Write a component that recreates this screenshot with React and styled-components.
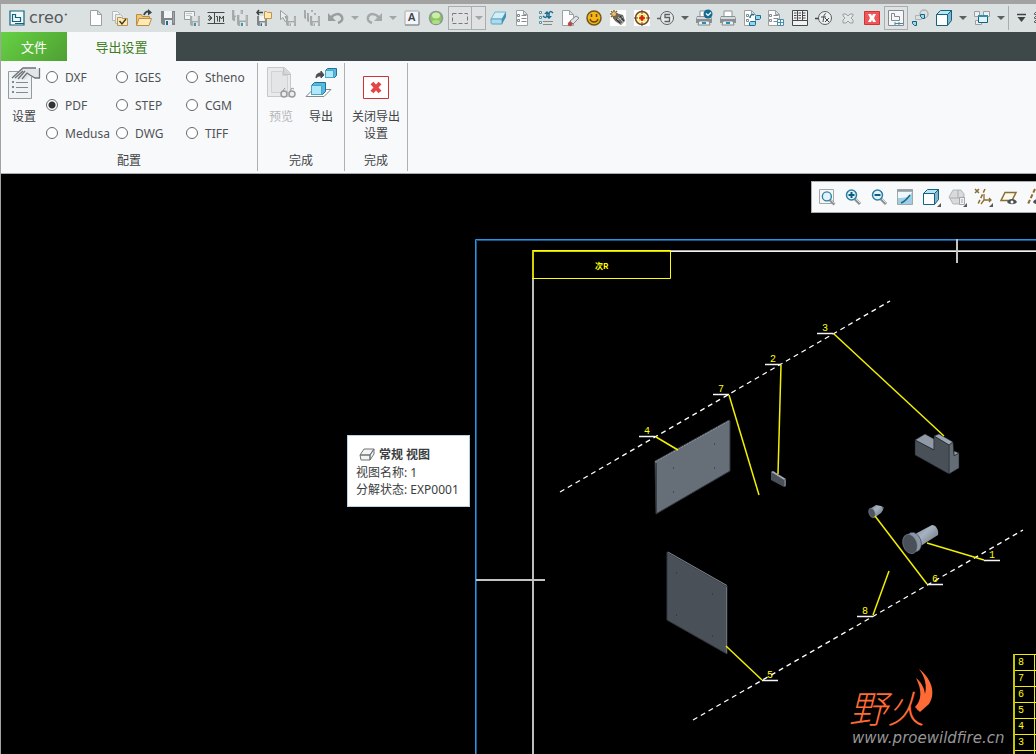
import React from 'react';
import styled, { createGlobalStyle, css } from 'styled-components';

const GlobalStyle = createGlobalStyle`
  * {
    box-sizing: border-box;
  }
  body {
    margin: 0;
    background: #000;
    font-family: 'Noto Sans', 'Noto Sans CJK SC', sans-serif;
    font-size: 12px;
    color: #3f4346;
  }
  button {
    border: none;
    padding: 0;
    background: none;
    font: inherit;
    color: inherit;
  }
`;

const AppStyles = styled.div`
  display: flex;
  flex-direction: column;
  min-height: 100vh;
  border-top: 4px solid #a2a2a2;
  border-left: 1px solid #a2a2a2;
  overflow: hidden;
`;

const QuickBar = styled.header`
  display: flex;
  align-items: center;
  height: 28px;
  background: #dbe1e1;
  overflow: hidden;
`;

const Brand = styled.div`
  display: flex;
  flex: none;
  align-items: center;
  gap: 4px;
  width: 83px;
  padding-left: 8px;
  font-family: 'DejaVu Sans', sans-serif;
  font-size: 16px;
  line-height: 24px;
  color: #54595c;
  sup {
    font-size: 7px;
    line-height: 8px;
  }
`;

const Glyph = styled.svg`
  display: block;
  flex: none;
  width: ${({ $size }) => $size || 16}px;
  height: ${({ $size }) => $size || 16}px;
  overflow: visible;
`;

const ToolButton = styled.button`
  display: flex;
  flex: none;
  align-items: center;
  justify-content: center;
  width: 24px;
  height: 24px;
  ${({ $framed }) =>
    $framed &&
    css`
      border: 1px solid #a9adaf;
      background: #dfe1e3;
    `}
`;

const CaretButton = styled(ToolButton)`
  width: 14px;
  color: ${({ $dim }) => ($dim ? '#a2a6a8' : '#5b5f61')};
  &::before {
    content: '';
    border: 4px solid transparent;
    border-top-color: currentColor;
    border-bottom: none;
  }
  ${({ $framed }) =>
    $framed &&
    css`
      border-left: none;
    `}
`;

const Separator = styled.span`
  flex: none;
  width: 1px;
  height: 24px;
  background: #a9adaf;
`;

const TabBar = styled.nav`
  display: flex;
  height: 29px;
  background: #3f4849;
  font-size: 13px;
`;

const FileButton = styled.button`
  width: 66px;
  color: #fff;
  background: linear-gradient(135deg, #66d143, #4ea033);
`;

const Tab = styled.button`
  width: 109px;
  color: #3f7d22;
  background: #f8f9fb;
`;

const Ribbon = styled.section`
  display: flex;
  padding: 2px 0;
  background: #f8f9fb;
  border-bottom: 1px solid #a9adaf;
`;

const Group = styled.div`
  display: flex;
  flex-direction: column;
  padding: 0 3px;
  border-right: 1px solid #adb0b3;
`;

const GroupBody = styled.div`
  display: flex;
  height: 88px;
  gap: ${({ $gap }) => $gap || 0}px;
`;

const GroupLabel = styled.div`
  line-height: 20px;
  text-align: center;
`;

const BigButton = styled.button`
  display: flex;
  flex-direction: column;
  align-items: center;
  gap: 9px;
  width: ${({ $wide }) => ($wide ? 56 : 40)}px;
  padding: 4px 3px 0;
  line-height: 17px;
  &:disabled {
    color: #b4b6b8;
  }
`;

const FormatGrid = styled.div`
  display: grid;
  grid-template-columns: 70px 70px 68px;
  grid-auto-rows: 28px;
`;

const FormatOption = styled.label`
  display: flex;
  align-items: center;
  gap: 7px;
  color: #505356;
  input {
    appearance: none;
    flex: none;
    width: 12px;
    height: 12px;
    margin: 0;
    border: 1px solid #66696b;
    border-radius: 50%;
    background: #fff;
  }
  input:checked {
    background: radial-gradient(circle, #333 3px, #fff 4px);
  }
`;

const Canvas = styled.main`
  position: relative;
  flex: 1;
  min-height: 580px;
  background: #000;
  overflow: hidden;
`;

const Drawing = styled.svg`
  position: absolute;
  inset: 0;
  width: 100%;
  height: 100%;
  font-family: 'Liberation Mono', monospace;
  font-size: 10px;
`;

const ViewBar = styled.div`
  position: absolute;
  top: 7px;
  left: 810px;
  display: flex;
  align-items: center;
  height: 32px;
  padding-left: 2px;
  background: #f8f9fb;
  border: 1px solid #a9adaf;
`;

const ViewButton = styled(ToolButton)`
  position: relative;
  width: 26px;
  ${({ $menu }) =>
    $menu &&
    css`
      &::after {
        content: '';
        position: absolute;
        right: 3px;
        bottom: 2px;
        border: 2px solid #55595b;
        border-top-color: transparent;
        border-left-color: transparent;
      }
    `}
`;

const Tooltip = styled.div`
  position: absolute;
  top: 261px;
  left: 346px;
  padding: 9px 10px 8px 8px;
  border: 1px solid #b7d3e6;
  background: #fff;
  line-height: 17px;
  white-space: nowrap;
  color: #3b3e40;
`;

const TooltipTitle = styled.div`
  display: flex;
  align-items: center;
  gap: 4px;
  padding-left: 3px;
  line-height: 19px;
  font-weight: 700;
`;

const PartsTable = styled.table`
  position: absolute;
  top: 480px;
  left: 1012px;
  width: 160px;
  border-collapse: collapse;
  font-family: 'Liberation Mono', monospace;
  font-size: 10px;
  line-height: 13px;
  color: #ff0;
  border-left: 2px solid #c8c800;
  td {
    height: 16px;
    padding: 1px 3px;
    border: 1px solid #f0f000;
  }
  td:first-child {
    width: 20px;
    border-left: 2px solid #c8c800;
  }
`;

const Watermark = styled.div`
  position: absolute;
  top: 514px;
  left: 848px;
  font-style: italic;
  svg {
    position: absolute;
    top: -20px;
    left: 61px;
  }
`;

const WatermarkName = styled.div`
  font-family: 'Noto Sans CJK SC', sans-serif;
  font-size: 38px;
  line-height: 38px;
  font-weight: 300;
  color: #ff6a35;
`;

const WatermarkUrl = styled.div`
  padding: 4px 0 0 3px;
  font-family: 'DejaVu Sans', sans-serif;
  font-size: 15px;
  line-height: 16px;
  color: #969696;
`;

const BLUE = '#1b6d92';
const GREY = '#85898b';

const Page = ({ x = 2, y = 0, w = 12, h = 16 }) => (
  <path
    d={`M${x + 0.5} ${y + 0.5}h${w - 5}l4 4v${h - 5}h-${w - 1}z M${x + w - 4.5} ${y + 0.5}v4h4`}
    fill="#fdfdfd"
    stroke="#9da1a3"
  />
);

const Disk = ({ x = 1, y = 1, s = 14, dim }) => (
  <g transform={`translate(${x} ${y}) scale(${s / 14})`}>
    <path d="M0 0h14v14H2l-2-2z" fill={dim ? '#a5a9aa' : '#808587'} />
    <path d="M3 0h8v7H3z" fill={dim ? '#dfe2e3' : '#f3f4f5'} />
    <path d="M4 9h7v5H4z" fill="#e5e9eb" />
    <path d="M5 10h2v4H5z" fill={dim ? '#a5a9aa' : BLUE} />
    <path d="M12.500 1v11" stroke={dim ? '#bfc3c4' : '#a3a8aa'} />
  </g>
);

const Printer = () => (
  <>
    <path d="M4 1h8v6H4z" fill="#fff" stroke="#8d9193" />
    <path d="M1 6h14l1 3v4H0V9z" fill="#8b9092" />
    <path d="M1 8h14" stroke="#d6d9db" strokeWidth="2" />
    <path d="M3 11h10l1 4H2z" fill="#e8f3f8" stroke="#85898b" />
    <path d="M6 12h4v2H6z" fill="#2e8db5" />
  </>
);

const ListLines = () => (
  <>
    <path d="M3.5 4.5h2v2h-2zM3.5 9.5h2v2h-2z" fill="none" stroke={GREY} />
    <path d="M7.5 5.5h5M7.5 8.5h5M7.5 11.5h5" stroke={GREY} />
  </>
);

const Cube = ({ light = '#b9e6f5', face = '#fff', stroke = '#14627f' }) => (
  <>
    <path d="M.5 4.5l4-4h11l-4 4z" fill={light} stroke={stroke} />
    <path d="M11.5 4.5l4-4v10l-4 5z" fill="#80b7cd" stroke={stroke} />
    <path d="M.5 4.5h11v11H.5z" fill={face} stroke={stroke} />
  </>
);

const Lens = ({ sign }) => (
  <>
    <path d="M10 10l5 5" stroke="#8b8f91" strokeWidth="3" />
    <path d="M11 10l4 4" stroke="#dcdedf" />
    <circle cx="6.5" cy="6" r="5" fill="#e3f3fa" stroke="#2b7ea5" strokeWidth="1.5" />
    {sign && <path d={sign} stroke="#0f5c82" strokeWidth="2" />}
  </>
);

const icons = {
  blank: <Page />,
  verify: (
    <>
      <path d="M.5 1.5h5l2 2v7h-7z" fill="#f4f5f5" stroke="#b4b8b9" />
      <path d="M3.5 4.5h5l2 2v7h-7z" fill="#eceeee" stroke="#b4b8b9" />
      <path d="M5.5 7.5h4l1 1h5v7h-10z" fill="#fbeab9" stroke="#b99549" />
      <path d="M7.5 11l2.5 3 4-5" fill="none" stroke="#3d3623" strokeWidth="1.4" />
    </>
  ),
  open: (
    <>
      <path d="M.5 15V4.5h5l1 2h7V9" fill="#edc67c" stroke="#b98d42" />
      <path d="M.5 15.5L3 8.5h12.500l-2.500 7z" fill="#ffe9b5" stroke="#b98d42" />
      <path d="M8 5c1-3 3-4 5-3" fill="none" stroke="#3d4244" strokeWidth="2" />
      <path d="M12-1l4 3.500-4 3z" fill="#3d4244" />
    </>
  ),
  save: <Disk />,
  saveAs: (
    <>
      <path d="M.5 1.5h10v8h-10z" fill="#f3f4f4" stroke="#999d9f" />
      <path d="M2 3.500h6M2 5.500h5" stroke="#c5c8c9" />
      <Disk x={6} y={6} s={10} dim />
      <path d="M10 13h2v3h-2z" fill="#4391b1" />
    </>
  ),
  rename: (
    <>
      <path d="M-.5 2.500h17M-.5 13.500h17" stroke="#45494b" />
      <path d="M6.500 3v10M0 6l3 2-3 2M1 5l3 3-3 3" fill="none" stroke="#45494b" />
      <path d="M8 6.500h1.500v5M11.500 12V6l2 3 2-3v6" fill="none" stroke="#45494b" />
    </>
  ),
  saveCopy: (
    <>
      <Disk x={0} y={0} s={11} dim />
      <path d="M4 4h12v12H4z" fill="#dbe1e1" />
      <Disk x={5} y={5} s={11} dim />
      <path d="M9 13h2v3H9z" fill="#4391b1" />
    </>
  ),
  backup: (
    <>
      <Disk x={1} y={6} s={10} />
      <path d="M8.500 1.500h2l1 1h4v6h-7z" fill="#ffe9b5" stroke="#c49345" />
      <path d="M1 2.500h6M3 0L1 2.500 3 5" fill="none" stroke="#3d4244" strokeWidth="1.500" />
    </>
  ),
  pickSave: (
    <>
      <path d="M.5.5v9l2.500-2 2 4 2-1-2-4h3z" fill="#e9ebec" stroke="#9a9ea0" />
      <Disk x={6} y={6} s={10} dim />
    </>
  ),
  saveAll: (
    <>
      <Disk x={0} y={0} s={9} dim />
      <path d="M2 2h11v11H2z" fill="#dbe1e1" />
      <Disk x={3} y={3} s={9} dim />
      <path d="M5 5h11v11H5z" fill="#dbe1e1" />
      <Disk x={6} y={6} s={10} dim />
    </>
  ),
  undo: (
    <>
      <path d="M3 8c3-5 9-5 11-1 1 3-1 5-4 6" fill="none" stroke="#999da0" strokeWidth="2.500" />
      <path d="M0 3v8h8z" fill="#999da0" />
    </>
  ),
  redo: (
    <>
      <path d="M13 8C10 3 4 3 2 7c-1 3 1 5 4 6" fill="none" stroke="#a4a8aa" strokeWidth="2.500" />
      <path d="M16 3v8H8z" fill="#a4a8aa" />
    </>
  ),
  letter: (
    <>
      <rect x="1" y="1" width="14" height="14" rx="1" fill="#f2f5f9" stroke="#a7abad" />
      <path d="M1 15h14V2" fill="none" stroke="#85898b" />
      <text x="4" y="11" fontSize="11" fontWeight="600" fill="#3d4244">A</text>
    </>
  ),
  lamp: (
    <>
      <circle cx="8" cy="8" r="6.500" fill="#8bc75a" stroke="#8e9694" strokeWidth="1.500" />
      <ellipse cx="8" cy="5.500" rx="4" ry="3" fill="#cbecac" />
      <ellipse cx="8" cy="12" rx="4" ry="2" fill="#aede84" />
    </>
  ),
  marquee: <path d="M.5 3.500h15v10H.5z" fill="none" stroke="#76797b" strokeDasharray="4 2" />,
  eraser: (
    <>
      <path d="M1 9l4-7h11l-4 7z" fill="#d3eef9" stroke="#71b6d0" />
      <path d="M1 9h11v5H2c-1 0-1-1-1-5z" fill="#aadbee" stroke="#5ca3bf" />
      <path d="M12 9l4-7v5l-4 7z" fill="#3e91b1" />
    </>
  ),
  list: (
    <>
      <Page />
      <ListLines />
    </>
  ),
  listSync: (
    <>
      <path d="M1.500 1.500h2v2h-2zM1.500 6.500h2v2h-2zM1.500 11.500h2v2h-2z" fill="#fff" stroke="#4f94ad" />
      <path d="M5 11.500h10M5 14.500h9" stroke="#85898b" />
      <path d="M5 6c2 2 4 2 4-1V3M15 3c-2-2-4-2-4 1v2" fill="none" stroke={BLUE} strokeWidth="1.500" />
      <path d="M6 4h6L9 1zM8 6h6l-3 3z" fill={BLUE} />
    </>
  ),
  pageErase: (
    <>
      <Page x={0} y={0} />
      <path d="M8 11l6-5 3 2-6 6z" fill="#dfe1e2" stroke="#85898b" />
      <path d="M8 11l3 3-2 2c-2 1-4-1-3-3z" fill="#b94a49" />
    </>
  ),
  smile: (
    <>
      <circle cx="8" cy="8" r="7" fill="#f5b517" stroke="#72561c" strokeWidth="1.500" />
      <path d="M5.500 4v3M10.500 4v3" stroke="#634711" strokeWidth="1.500" />
      <path d="M4 9c1 4 7 4 8 0" fill="none" stroke="#634711" strokeWidth="1.300" />
    </>
  ),
  gears: (
    <>
      <path d="M0 0h16v16H0z" fill="#fff" />
      <path d="M2 6l4-3 7 2 2 6-4 4-6-4z" fill="#6a6c68" />
      <path d="M4 0v9M0 4h8M1 1l6 6M7 1L1 7" stroke="#80632f" strokeWidth="1.500" />
      <circle cx="4" cy="4" r="2" fill="#e4c17f" />
      <path d="M8 7l5 5M7 10l6-3M11 14l4-3" stroke="#bcbdb9" />
      <path d="M6 9l4 4M10 6l4 5" stroke="#272a27" />
    </>
  ),
  target: (
    <>
      <path d="M0 0h16v16H0z" fill="#fff" />
      <circle cx="8" cy="8" r="6.500" fill="#fffbc0" stroke="#7d4329" strokeWidth="1.500" />
      <path d="M5 5l6 6M11 5l-6 6" stroke="#f0e622" strokeWidth="2" />
      <path d="M8 0v16M0 8h16" stroke="#71401f" strokeDasharray="4 2" />
      <path d="M8 5l1 2 2 1-2 1-1 2-1-2-2-1 2-1z" fill="#d9202a" stroke="#d9202a" />
    </>
  ),
  balloon: (
    <>
      <circle cx="9" cy="8" r="6.500" fill="#e7ebeb" stroke="#5b5f61" />
      <path d="M-1 8.500h3.500" stroke="#5b5f61" strokeWidth="1.500" />
      <path d="M12 4.500H7v3h4.500v4H6.500" fill="none" stroke="#5b5f61" strokeWidth="1.300" />
    </>
  ),
  printCheck: (
    <>
      <Printer />
      <circle cx="12" cy="4" r="4.500" fill="#176b91" />
      <path d="M10 3.500l2 2 3-3" fill="none" stroke="#fff" strokeWidth="1.200" />
    </>
  ),
  print: <Printer />,
  listCubes: (
    <>
      <Page x={0} />
      <path d="M2.500 4.500h2v2h-2zM2.500 9.500h2v2h-2z" fill="none" stroke={GREY} />
      <path d="M5.500 12.500l1-1h5v3l-1 1h-5zM11.500 6.500l1-1h4v3l-1 1h-4z" fill="#8ed7f0" stroke={BLUE} />
      <path d="M6 8c0-3 2-4 4-3" fill="none" stroke={BLUE} strokeWidth="1.500" />
    </>
  ),
  listTable: (
    <>
      <Page x={0} />
      <g transform="translate(-2 0)">
        <ListLines />
      </g>
      <path d="M9.500 9.500h6v6h-6zM12.500 9v7M9 12.500h7" fill="#fff" stroke="#4a8fa9" />
    </>
  ),
  film: (
    <>
      <path d="M.5.5h15v10H.5zM.5 10.500h15v5H.5z" fill="#f2f3f1" stroke="#45494b" />
      <path d="M5.500 0v10M10.500 0v10" stroke="#45494b" />
      <path d="M2 3h12M2 5.500h12M2 8h12" stroke="#45494b" strokeDasharray="2.500 2" />
    </>
  ),
  formula: (
    <>
      <circle cx="9" cy="8" r="6.500" fill="#eff1f1" stroke="#5b5f61" />
      <path d="M-1 8.500h3.500" stroke="#3f4346" strokeWidth="1.500" />
      <path d="M10 4c-2-1-2 2-3 8M5 7h5M9 8l4 4M13 8l-4 4" fill="none" stroke="#3f4346" />
    </>
  ),
  closeDim: (
    <path
      d="M3 4h3l2 2 2-2h3v2l-2 2 2 2v3h-3l-2-2-2 2H3v-3l2-2-2-2z"
      fill="#e2e5e5"
      stroke="#9b9fa1"
    />
  ),
  closeRed: (
    <>
      <path d="M.5 1.500h15v13H.5z" fill="#ef5657" stroke="#cf3336" />
      <path d="M4 4h3l1 2 1-2h3l-2 4 2 4H9l-1-2-1 2H4l2-4z" fill="#fff" />
    </>
  ),
  sheet: (
    <>
      <path d="M.5.5h15v15H.5z" fill="#f5f6f7" stroke="#85898b" />
      <path d="M3.500 3.500h3v3h5v4h-8z" fill="none" stroke="#85898b" />
      <path d="M7 13.500h8M7 12v3M11 12v3" stroke="#408ba9" />
    </>
  ),
  links: (
    <>
      <circle cx="12" cy="4" r="4" fill="none" stroke="#b0b3b4" strokeWidth="1.500" />
      <path d="M3.500 5.500h6v4h-6z" fill="none" stroke="#b0b3b4" />
      <path d="M8.500 4.500h4v4h-2l-2-2zM.5 11.500h4v4h-2l-2-2z" fill="#9adaf0" stroke="#14627f" />
    </>
  ),
  cube: <Cube />,
  windows: (
    <>
      <path d="M.5 1.500h5v5h-5zM9.500 1.500h6v5h-6zM1.500 10.500h6v4h-6z" fill="#eef0f0" stroke="#9b9fa1" />
      <path d="M4.500 5.500h9v7h-9z" fill="#dff3fa" stroke="#14627f" />
      <path d="M4 6h10" stroke="#2e8db5" strokeWidth="2" />
    </>
  ),
  overflow: (
    <>
      <path d="M4 4.500h9" stroke="#3f4346" strokeWidth="1.500" />
      <path d="M4.500 7h8l-4 5z" fill="#3f4346" />
    </>
  ),
  grip: <path d="M4 1l-3 3 3 1-3 3 3 1-3 3 3 1" fill="none" stroke="#5b5f61" />,
};

const viewIcons = [
  {
    name: 'Refit',
    art: (
      <>
        <path d="M.5.5h14v14H.5z" fill="#f4f6f7" stroke="#a3a7a9" />
        <g transform="translate(2 2) scale(.9)">
          <Lens />
        </g>
      </>
    ),
  },
  { name: 'Zoom in', art: <Lens sign="M3.500 6h6M6.500 3v6" /> },
  { name: 'Zoom out', art: <Lens sign="M3.500 6h6" /> },
  {
    name: 'Repaint',
    art: (
      <>
        <path d="M.5.500h15v15H.5z" fill="#9fcfe4" stroke="#a3a7a9" />
        <path d="M1 3h14C13 8 9 9 1 9z" fill="#eef7fb" />
        <path d="M0 1.500h16" stroke="#999d9f" strokeWidth="2" />
        <path d="M4 14c3-1 6-4 9-8" fill="none" stroke="#176b91" strokeWidth="1.500" />
      </>
    ),
  },
  { name: 'Display style', menu: true, art: <Cube /> },
  {
    name: 'Saved views',
    menu: true,
    art: (
      <>
        <path d="M0 8l4-7h8l3 4v7l-3 3H4z" fill="#d8dadb" stroke="#b3b6b8" />
        <path d="M9 1v8H1M9 9l6-1" fill="none" stroke="#aaadaf" />
        <path d="M10.500 8.500h5v7h-5z" fill="#f0f1f2" stroke="#a3a7a9" />
        <path d="M12 11h2M12 13h2" stroke="#a3a7a9" />
      </>
    ),
  },
  {
    name: 'Datum filters',
    menu: true,
    art: (
      <>
        <path d="M0 0l4 4M4 0L0 4" fill="none" stroke="#8a6d2f" strokeWidth="1.500" />
        <path d="M10 0L3 15" fill="none" stroke="#8a6d2f" strokeWidth="1.500" strokeDasharray="4 2" />
        <path d="M9 5v6l-3 4M9 11h7M14 9l2 2-2 2" fill="none" stroke="#8a6d2f" strokeWidth="1.300" />
      </>
    ),
  },
  {
    name: 'Plane display',
    art: (
      <>
        <path d="M4 3.500h11l-4 8H0z" fill="#fbf8ef" stroke="#8a6d2f" strokeWidth="1.500" />
        <path d="M6 13c2-4 8-4 10 0-2 3-8 3-10 0z" fill="#4b4f51" />
        <circle cx="11" cy="13" r="1.500" fill="#fff" />
      </>
    ),
  },
  {
    name: 'Axis display',
    art: (
      <>
        <path d="M8 0L1 15" stroke="#8a6d2f" strokeWidth="2" strokeDasharray="4 2" />
        <path d="M6 13c2-4 8-4 10 0-2 3-8 3-10 0z" fill="#4b4f51" />
      </>
    ),
  },
];

const quickTools = [
  ['blank', 'New'],
  ['verify', 'Check out'],
  ['open', 'Open'],
  ['save', 'Save'],
  ['saveAs', 'Save as'],
  ['rename', 'Rename'],
  ['saveCopy', 'Save a copy'],
  ['backup', 'Back up'],
  ['pickSave', 'Save selected'],
  ['saveAll', 'Save all'],
  ['undo', 'Undo', 'dim'],
  ['redo', 'Redo', 'dim'],
  ['letter', 'Text style'],
  ['lamp', 'Regenerate'],
  ['marquee', 'Select', 'framed'],
  ['eraser', 'Erase'],
  ['list', 'Model tree'],
  ['listSync', 'Update tree'],
  ['pageErase', 'Erase not displayed'],
  ['smile', 'Feedback'],
  ['gears', 'Mechanism'],
  ['target', 'Locate'],
  ['balloon', 'Balloons', 'menu'],
  ['printCheck', 'Print check'],
  ['print', 'Print'],
  ['listCubes', 'Replace components'],
  ['listTable', 'Parts table'],
  ['film', 'Animation'],
  ['formula', 'Relations'],
  ['closeDim', 'Close'],
  ['closeRed', 'Close window'],
  ['sheet', 'Sheet setup', 'boxed'],
  ['links', 'References'],
  ['cube', 'Display style', 'menu'],
  ['windows', 'Windows', 'menu'],
];

function QuickTool({ icon, name, kind }) {
  const framed = kind === 'framed' || kind === 'boxed';
  const hasMenu = kind && kind !== 'boxed';
  return (
    <>
      <ToolButton aria-label={name} $framed={framed}>
        <Glyph viewBox="0 0 16 16">{icons[icon]}</Glyph>
      </ToolButton>
      {hasMenu && (
        <CaretButton
          aria-label={`${name} menu`}
          $dim={kind === 'dim' || framed}
          $framed={framed}
        />
      )}
    </>
  );
}

const formats = [
  'DXF', 'IGES', 'Stheno',
  'PDF', 'STEP', 'CGM',
  'Medusa', 'DWG', 'TIFF',
];

// shelf: left end of the white underline, tip: where the leader meets the part
const balloons = [
  { no: 4, shelf: [639, 436], from: [656, 437], tip: [678, 450] },
  { no: 7, shelf: [713, 394], from: [729, 395], tip: [759, 495] },
  { no: 2, shelf: [765, 364], from: [781, 365], tip: [778, 474] },
  { no: 3, shelf: [817, 333], from: [834, 334], tip: [944, 436] },
  { no: 1, shelf: [984, 560], from: [984, 560], tip: [927, 543] },
  { no: 6, shelf: [927, 584], from: [927, 584], tip: [875, 516] },
  { no: 8, shelf: [857, 616], from: [873, 615], tip: [889, 571] },
  { no: 5, shelf: [762, 680], from: [762, 680], tip: [726, 646] },
];

function Sheet() {
  return (
    <Drawing>
      <defs>
        <linearGradient id="steel" x1="0" y1="0" x2="1" y2="1">
          <stop offset="0" stopColor="#7c8692" />
          <stop offset=".4" stopColor="#a6b2c0" />
          <stop offset="1" stopColor="#626b76" />
        </linearGradient>
      </defs>
      <g transform="translate(-1 -174)" fill="none">
        {/* sheet edge and frame */}
        <path d="M3000 240.500H476.500V3000" stroke="#145488" />
        <path d="M3000 239.500H475.500V3000" stroke="#2f90dc" />
        <path d="M533 279V3000" stroke="#bdbdbd" strokeWidth="2" />
        <path d="M670 250.500H3000" stroke="#a8a8a8" />
        <path d="M670 251.500H3000" stroke="#f4f4f4" />
        <path d="M957 239v24M476 580h69" stroke="#c4c4c4" strokeWidth="2" />
        <path d="M533 279V251H670" stroke="#d2d200" strokeWidth="2" />
        <path d="M532 278.500H670.500V250.500H533" stroke="#ff0" />
        <text x="595" y="269" fontSize="8" fontWeight="700" fill="#ff0" fontFamily="Noto Sans CJK SC">
          次R
        </text>

        {/* explode lines */}
        <path
          d="M560 492L890 301M693 720L1023 530"
          stroke="#fff"
          strokeWidth="1.300"
          strokeDasharray="5 4"
        />

        {/* plates */}
        <path d="M655 461L729 420l1 1v50l-74 43z" fill="#666e77" stroke="#30343a" />
        <path d="M655 462L729 421" stroke="#8d97a3" strokeDasharray="2 1" />
        <path d="M656.500 463v50" stroke="#3c4148" />
        <path d="M667 552l60 34v68l-60-34z" fill="#4a5058" stroke="#33383e" />
        <path d="M668 552l59 33.500" stroke="#7b848f" />
        <path d="M726.500 587v66" stroke="#6a727c" />
        <path
          d="M673 468h1M714 444h1M673 492h1M714 468h1M676 573h1M712 594h1M676 615h1M712 636h1"
          stroke="#24282c"
        />

        {/* small key */}
        <path d="M771 472l13 8v7l-13-7z" fill="#4a5058" />
        <path d="M771 472l2-1 13 8-2 1z" fill="#a1abb7" />
        <path d="M784 480l2-1v7l-2 1z" fill="#6a727c" />

        {/* stepped block */}
        <g stroke="#1d2024" strokeWidth=".5">
          <path d="M915 440l10-6 9 5v11z" fill="#909aa7" />
          <path d="M954 451l5 2-5 3z" fill="#909aa7" />
          <path d="M934 436l5-2 14 8-4 3z" fill="#9aa5b2" />
          <path d="M949 445l4-3 1 14 5-3v15l-10 6z" fill="#646c76" />
          <path d="M915 440l19 10V436l15 9v29l-34-19z" fill="#4a5058" />
        </g>

        {/* pin */}
        <path d="M870 509l6-4 5 1 2 1v3l-2 3-7 5z" fill="url(#steel)" />
        <ellipse cx="872" cy="513" rx="3" ry="5" transform="rotate(-20 872 513)" fill="#4f565f" stroke="#8590a0" strokeWidth=".5" />
        <circle cx="883" cy="508" r="1" fill="#59616b" />

        {/* flanged bolt */}
        <path d="M915 534l17-9c4 0 7 5 6 10l-19 12z" fill="url(#steel)" />
        <ellipse cx="914" cy="542" rx="7" ry="10" transform="rotate(-20 914 542)" fill="#8c97a5" stroke="#23272b" strokeWidth=".5" />
        <ellipse cx="910" cy="544" rx="7" ry="10" transform="rotate(-20 910 544)" fill="#4a5058" stroke="#8590a0" strokeWidth=".5" />

        {balloons.map(({ no, shelf, from, tip }) => (
          <g key={no}>
            <path d={`M${shelf[0]} ${shelf[1] + 0.5}h16`} stroke="#f4f4f4" strokeWidth="1.500" />
            <path d={`M${from}L${tip}`} stroke="#f0f000" strokeWidth="1.500" />
            <text x={shelf[0] + 5} y={shelf[1] - 2} fill="#ff0">
              {no}
            </text>
          </g>
        ))}
      </g>
    </Drawing>
  );
}

export default function App() {
  return (
    <>
      <GlobalStyle />
      <AppStyles>
        <QuickBar>
          <Brand>
            <Glyph viewBox="0 0 16 16">
              <path d="M1 1h14v14H1z" fill="#f1f8fa" stroke="#14627f" strokeWidth="1.200" />
              <path d="M3.500 4.500h3v3h5v4h-8zM6 13.500h9" fill="none" stroke="#14627f" strokeWidth="1.200" />
            </Glyph>
            <span>
              creo<sup>•</sup>
            </span>
          </Brand>
          {quickTools.map(([icon, name, kind]) => (
            <QuickTool key={icon} icon={icon} name={name} kind={kind} />
          ))}
          <Separator />
          <ToolButton aria-label="Customize toolbar">
            <Glyph viewBox="0 0 16 16">{icons.overflow}</Glyph>
          </ToolButton>
          <Glyph viewBox="0 0 16 16">{icons.grip}</Glyph>
        </QuickBar>

        <TabBar>
          <FileButton>文件</FileButton>
          <Tab>导出设置</Tab>
        </TabBar>

        <Ribbon>
          <Group>
            <GroupBody $gap={2}>
              <BigButton>
                <Glyph $size={32} viewBox="0 0 32 32">
                  <path d="M.5 4.500h23v27H.5z" fill="#eef3f6" stroke="#969a9c" />
                  <path d="M4 15h2M4 20h2M4 25h2" stroke="#85898b" strokeWidth="2" />
                  <path d="M8 15.500h12M8 20.500h12M8 25.500h12" stroke="#85898b" />
                  <path d="M4 10L14 1h13l4 1v9h-4l-6-2-4 4-3-2-3 2-1-2-3 1z" fill="#e3e6e8" />
                  <path d="M4 11L15 1h13M7 11l8-7M10 12l7-8M14 12l5-6 3 2 5 3h5M31.500 1v10" fill="none" stroke="#6e7375" strokeWidth="1.300" />
                </Glyph>
                设置
              </BigButton>
              <FormatGrid>
                {formats.map((format) => (
                  <FormatOption key={format}>
                    <input type="radio" name="format" defaultChecked={format === 'PDF'} />
                    {format}
                  </FormatOption>
                ))}
              </FormatGrid>
            </GroupBody>
            <GroupLabel>配置</GroupLabel>
          </Group>

          <Group>
            <GroupBody>
              <BigButton disabled>
                <Glyph $size={32} viewBox="0 0 32 32">
                  <path d="M2.500.5h17l6 6v23h-23z" fill="#e9eaeb" stroke="#c6c8ca" />
                  <path d="M6.500 4.500h11v4h5v17h-16z" fill="#e3e5e6" stroke="#d0d2d3" />
                  <path d="M18.500.5v7h7" fill="#d3d5d6" stroke="#bfc2c3" />
                  <circle cx="19" cy="27" r="3" fill="#eceded" stroke="#999c9e" strokeWidth="1.500" />
                  <circle cx="27" cy="27" r="3" fill="#eceded" stroke="#999c9e" strokeWidth="1.500" />
                  <path d="M16 26l4-5M24 26l3-5 2 1" fill="none" stroke="#999c9e" />
                </Glyph>
                预览
              </BigButton>
              <BigButton>
                <Glyph $size={32} viewBox="0 0 32 32">
                  <path d="M1 29.500l7-7h18l-7 7z" fill="#fff" stroke="#85898b" />
                  <path d="M6.500 18.500l3-3h11v9l-3 3h-11z" fill="#56b9dd" stroke="#177397" />
                  <path d="M6.500 18.500h10v9h-10z" fill="#afe8fb" stroke="#48a6c7" />
                  <path d="M20.500 3.500l2-2h9v7l-2 2h-9z" fill="#56b9dd" stroke="#177397" />
                  <path d="M20.500 3.500h8v7h-8z" fill="#afe8fb" stroke="#48a6c7" />
                  <path d="M11 11c0-4 2-5 5-5V4l3 4-3 3V9c-2 0-3 0-5 2z" fill="#4a4e50" stroke="#4a4e50" />
                </Glyph>
                导出
              </BigButton>
            </GroupBody>
            <GroupLabel>完成</GroupLabel>
          </Group>

          <Group>
            <GroupBody>
              <BigButton $wide>
                <Glyph $size={32} viewBox="0 0 32 32">
                  <path d="M3.500 9.500h25v22h-25z" fill="#fff" stroke="#cf3336" />
                  <path d="M12 16l8 9M20 16l-8 9" stroke="#e64546" strokeWidth="4" />
                </Glyph>
                <span>
                  关闭导出
                  <br />
                  设置
                </span>
              </BigButton>
            </GroupBody>
            <GroupLabel>完成</GroupLabel>
          </Group>
        </Ribbon>

        <Canvas>
          <Sheet />

          <ViewBar>
            {viewIcons.map(({ name, menu, art }) => (
              <ViewButton key={name} aria-label={name} $menu={menu}>
                <Glyph viewBox="0 0 16 16">{art}</Glyph>
              </ViewButton>
            ))}
          </ViewBar>

          <Tooltip role="tooltip">
            <TooltipTitle>
              <Glyph viewBox="0 0 16 16">
                <path d="M1 8l4-6h10l-4 6zM1 8h10v5H2zM11 8l4-6v5l-4 6z" fill="#f2f3f3" stroke="#6e7375" />
              </Glyph>
              常规 视图
            </TooltipTitle>
            <div>视图名称: 1</div>
            <div>分解状态: EXP0001</div>
          </Tooltip>

          <Watermark>
            <WatermarkName>野火</WatermarkName>
            <WatermarkUrl>www.proewildfire.cn</WatermarkUrl>
            <svg width="28" height="44" viewBox="0 0 28 44">
              <path
                d="M9 1C20 9 27 24 19 36l-9 8-5-5C12 32 12 22 6 10c5 4 8 9 9 16 2-9 0-17-6-25z"
                fill="#ff6a35"
              />
            </svg>
          </Watermark>

          <PartsTable>
            <tbody>
              {[8, 7, 6, 5, 4, 3].map((no) => (
                <tr key={no}>
                  <td>{no}</td>
                  <td />
                </tr>
              ))}
              <tr>
                <td />
                <td />
              </tr>
            </tbody>
          </PartsTable>
        </Canvas>
      </AppStyles>
    </>
  );
}
